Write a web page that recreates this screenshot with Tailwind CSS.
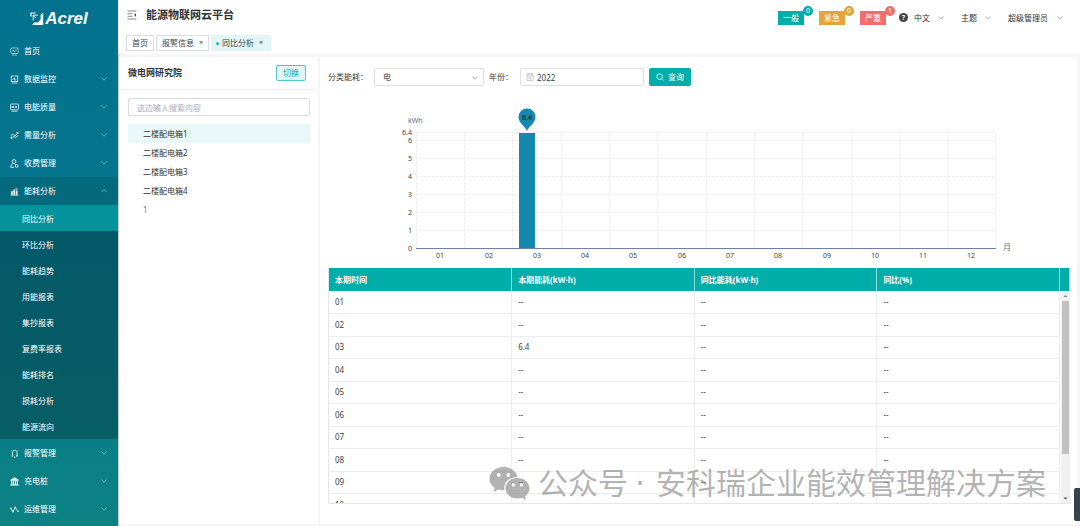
<!DOCTYPE html>
<html lang="zh-CN">
<head>
<meta charset="utf-8">
<title>能源物联网云平台</title>
<script src="https://cdn.jsdelivr.net/npm/@tailwindcss/browser@4"></script>
</head>
<body class="relative flex h-screen overflow-hidden bg-[#f6f6f6] font-['Noto_Sans','Noto_Sans_CJK_SC',sans-serif] text-[8px] leading-3 text-[#404244]">
<svg class="hidden">
  <symbol id="down" viewBox="0 0 8 8"><path d="M1.5 2.5 4 5.2 6.500 2.500" fill="none" stroke="currentColor" stroke-width=".8"/></symbol>
  <symbol id="up" viewBox="0 0 8 8"><path d="M1.500 5.200 4 2.500 6.500 5.200" fill="none" stroke="currentColor" stroke-width=".8"/></symbol>
</svg>

<nav class="flex w-[118px] shrink-0 flex-col overflow-hidden bg-linear-to-b from-[#03728f] via-[#06778b] to-[#0c8284] text-white shadow-[1px_0_2px_rgba(0,0,0,0.25)]">
  <a href="#" class="flex h-[37px] shrink-0 items-center justify-center gap-px" aria-label="Acrel">
    <svg class="size-[14px]" viewBox="0 0 14 14" fill="none" stroke="white"><path d="M1 4.500V1H5.500" stroke-width="1.200"/><path d="M3.200 8.500V3.200H8" stroke-width=".9"/><path d="M3.500 3.500 6 6" stroke-width="1"/><path d="M13.200.8V13H2.200L4 10.600H7.800L10.600 7.600V2.800Z" fill="white" stroke="none"/></svg>
    <span class="font-['Liberation_Sans',sans-serif] text-[17px] leading-5 font-bold italic">Acrel</span>
  </a>
  <a href="#" class="flex h-[28px] shrink-0 items-center gap-[5px] px-[10px]">
    <svg class="size-[9px] opacity-80" viewBox="0 0 9 9" fill="none" stroke="currentColor" stroke-width=".7"><rect x=".8" y="1" width="7.400" height="5.500" rx="1"/><path d="M2.500 4.500 3.500 3l1 1.500L6.500 3M2 8h5"/></svg>
    <span>首页</span>
  </a>
  <a href="#" class="flex h-[28px] shrink-0 items-center gap-[5px] px-[10px]">
    <svg class="size-[9px]" viewBox="0 0 9 9" fill="none" stroke="currentColor" stroke-width=".7"><rect x="1.200" y="1" width="6.600" height="5.500"/><path d="M2.500 4.200h1.300l.9-1.400v2.200h1.800M1.500 8H7.500"/></svg>
    <span class="grow">数据监控</span><svg class="size-2 opacity-50"><use href="#down"/></svg>
  </a>
  <a href="#" class="flex h-[28px] shrink-0 items-center gap-[5px] px-[10px]">
    <svg class="size-[9px]" viewBox="0 0 9 9" fill="none" stroke="currentColor" stroke-width=".7"><rect x=".5" y="1" width="8" height="5.800" rx="1"/><path d="M2 3v1.800l1.500-1.800v2M5 5l1-2 1 2M1.500 8.200h6"/></svg>
    <span class="grow">电能质量</span><svg class="size-2 opacity-50"><use href="#down"/></svg>
  </a>
  <a href="#" class="flex h-[28px] shrink-0 items-center gap-[5px] px-[10px]">
    <svg class="size-[9px]" viewBox="0 0 9 9" fill="none" stroke="currentColor" stroke-width=".8"><path d="M.8 4.500 3 3l2 2 3-3.500M6.500 1.500H8V3M2 7l2-1.500 1.500 1L8 4.500"/><circle cx="1.500" cy="6.800" r=".7"/></svg>
    <span class="grow">需量分析</span><svg class="size-2 opacity-50"><use href="#down"/></svg>
  </a>
  <a href="#" class="flex h-[28px] shrink-0 items-center gap-[5px] px-[10px]">
    <svg class="size-[9px]" viewBox="0 0 9 9" fill="none" stroke="currentColor" stroke-width=".8"><circle cx="4" cy="2.500" r="1.900"/><path d="M.7 8.300C.8 6 2 4.800 3.500 4.500M.7 8.300H4M5 4.800l1 1"/><circle cx="6.700" cy="7" r="1.400"/></svg>
    <span class="grow">收费管理</span><svg class="size-2 opacity-50"><use href="#down"/></svg>
  </a>
  <a href="#" class="flex h-[28px] shrink-0 items-center gap-[5px] bg-black/10 px-[10px]">
    <svg class="size-[9px]" viewBox="0 0 9 9" fill="currentColor"><path d="M1 4h1.700v3.500H1zM3.400 2.500h1.700v5H3.400zM5.800 3.500h1.700v4H5.800zM.5 7.800h8v.6h-8zM5.500 1.500h2v1h-2z"/></svg>
    <span class="grow">能耗分析</span><svg class="size-2 opacity-50"><use href="#up"/></svg>
  </a>
  <div class="flex shrink-0 flex-col bg-black/25">
    <a href="#" class="flex h-[26px] items-center bg-[#04939d] pt-px pl-[22px]">同比分析</a>
    <a href="#" class="flex h-[26px] items-center pt-px pl-[22px]">环比分析</a>
    <a href="#" class="flex h-[26px] items-center pt-px pl-[22px]">能耗趋势</a>
    <a href="#" class="flex h-[26px] items-center pt-px pl-[22px]">用能报表</a>
    <a href="#" class="flex h-[26px] items-center pt-px pl-[22px]">集抄报表</a>
    <a href="#" class="flex h-[26px] items-center pt-px pl-[22px]">复费率报表</a>
    <a href="#" class="flex h-[26px] items-center pt-px pl-[22px]">能耗排名</a>
    <a href="#" class="flex h-[26px] items-center pt-px pl-[22px]">损耗分析</a>
    <a href="#" class="flex h-[26px] items-center pt-px pl-[22px]">能源流向</a>
  </div>
  <a href="#" class="flex h-[28px] shrink-0 items-center gap-[5px] px-[10px]">
    <svg class="size-[9px]" viewBox="0 0 9 9" fill="none" stroke="currentColor" stroke-width=".8"><path d="M2.500 7V3.500C2.500 2 3.300 1.300 4.800 1.300S7 2 7 3.500V7M1.500 7h2M6 7h2M4 8.200h1.500M1.200 1.500l.6.500M8.300 1.500l-.6.500"/></svg>
    <span class="grow">报警管理</span><svg class="size-2 opacity-50"><use href="#down"/></svg>
  </a>
  <a href="#" class="flex h-[28px] shrink-0 items-center gap-[5px] px-[10px]">
    <svg class="size-[9px]" viewBox="0 0 9 9" fill="currentColor"><path d="M4.500.3 8.500 2.800v.9h-8v-.9zM1.200 4h1.200v3.500H1.200zM3.300 4h.9v3.500h-.9zM4.900 4h.9v3.500h-.9zM6.700 4h1.200v3.500H6.700zM.3 7.600h8.400v.9H.3z"/></svg>
    <span class="grow">充电桩</span><svg class="size-2 opacity-50"><use href="#down"/></svg>
  </a>
  <a href="#" class="flex h-[28px] shrink-0 items-center gap-[5px] px-[10px]">
    <svg class="size-[9px]" viewBox="0 0 9 9" fill="none" stroke="currentColor" stroke-width=".9"><path d="M.8 3.500 2.800 6.800 5.300 2.500 7.800 6"/><g fill="currentColor" stroke="none"><circle cx=".9" cy="3.200" r=".8"/><circle cx="2.800" cy="6.800" r=".8"/><circle cx="5.300" cy="2.400" r=".8"/><circle cx="8" cy="6.200" r=".8"/></g></svg>
    <span class="grow">运维管理</span><svg class="size-2 opacity-50"><use href="#down"/></svg>
  </a>
</nav>

<div class="flex min-w-0 grow flex-col">
  <header class="h-[54px] shrink-0 bg-white">
    <div class="flex h-[35px] items-center justify-between pr-4 pl-[9px]">
      <div class="flex items-center gap-[9px] pb-[6px]">
        <button aria-label="折叠菜单"><svg class="size-[10px]" viewBox="0 0 10 10" stroke="#666" stroke-width=".8" fill="none"><path d="M.5 1h9M.5 3.700h5M.5 6.300h5M.5 9h9"/><path d="M9 3 7 5l2 2z" fill="#555" stroke="none"/></svg></button>
        <h1 class="text-[11px] leading-4 font-bold text-[#303133]">能源物联网云平台</h1>
      </div>
      <div class="flex items-center text-[#333]">
        <button class="relative mr-[15px] h-[14px] w-[26px] bg-[#00ada8] text-white">一般<span class="absolute -top-[5px] -right-[9px] size-[10px] rounded-full bg-[#00ada8] text-[7px] leading-[10px]">0</span></button>
        <button class="relative mr-[15px] h-[14px] w-[26px] bg-[#e6a23c] text-white">紧急<span class="absolute -top-[5px] -right-[9px] size-[10px] rounded-full bg-[#e6a23c] text-[7px] leading-[10px]">0</span></button>
        <button class="relative mr-[13px] h-[14px] w-[26px] bg-[#f56c6c] text-white">严重<span class="absolute -top-[5px] -right-[9px] size-[10px] rounded-full bg-[#f56c6c] text-[7px] leading-[10px]">1</span></button>
        <button class="mr-[6px] size-[9px] rounded-full bg-[#444] text-[7px] leading-[9px] font-bold text-white" aria-label="帮助">?</button>
        <button class="mr-[16px] flex items-center gap-[7px]">中文<svg class="size-2 text-[#aaa]"><use href="#down"/></svg></button>
        <button class="mr-[16px] flex items-center gap-[7px]">主题<svg class="size-2 text-[#aaa]"><use href="#down"/></svg></button>
        <button class="flex items-center gap-[8px]">超级管理员<svg class="size-2 text-[#aaa]"><use href="#down"/></svg></button>
      </div>
    </div>
    <div class="flex gap-[2px] pl-2">
      <a href="#" class="flex h-4 items-center border border-[#d8dce5] px-[5px]">首页</a>
      <a href="#" class="flex h-4 items-center gap-[5px] border border-[#d8dce5] px-[5px]">报警信息<span class="text-[7px]">×</span></a>
      <a href="#" class="flex h-4 items-center gap-[5px] border border-[#e0f5f4] bg-[#e3f6f5] px-1"><span class="-mr-[2px] size-[3px] rounded-full bg-[#13c2b8]"></span>同比分析<span class="pr-[3px] text-[7px]">×</span></a>
    </div>
  </header>

  <div class="flex min-h-0 grow gap-[2px] pt-[3px] pr-[3px] pb-[2px] pl-px">
    <aside class="w-[199px] shrink-0 bg-white">
      <div class="flex h-[33px] items-center justify-between border-b border-[#f0f0f0] pr-3 pl-[9px]">
        <h2 class="text-[9px] font-bold text-[#333]">微电网研究院</h2>
        <button class="h-4 w-[30px] rounded-[2px] border border-[#4fc9c5] bg-[#e3f6f5] leading-[14px] text-[#00ada8]">切换</button>
      </div>
      <div class="flex flex-col gap-2 pt-2 pr-2 pl-[9px]">
        <input type="text" aria-label="搜索" placeholder="这边输入搜索内容" class="h-[18px] w-full rounded-[2px] border border-[#d9dce0] px-2 text-[8px] placeholder:text-[#a8abb2]">
        <ul>
          <li><a href="#" class="flex h-[19px] items-center bg-[#e8f7f7] pl-[15px] text-[#333]">二楼配电箱1</a></li>
          <li><a href="#" class="flex h-[19px] items-center pl-[15px] text-[#333]">二楼配电箱2</a></li>
          <li><a href="#" class="flex h-[19px] items-center pl-[15px] text-[#333]">二楼配电箱3</a></li>
          <li><a href="#" class="flex h-[19px] items-center pl-[15px] text-[#333]">二楼配电箱4</a></li>
          <li><a href="#" class="flex h-[19px] items-center pl-[15px] text-[#777]">1</a></li>
        </ul>
      </div>
    </aside>

    <main class="flex min-w-0 grow flex-col bg-white pt-[11px] pr-[7px] pb-5 pl-2">
      <form class="flex h-[18px] shrink-0 items-center">
        <label for="energy" class="w-[46px]">分类能耗：</label>
        <div class="relative mr-[5px]">
          <select id="energy" class="h-[18px] w-[110px] appearance-none rounded-[2px] border border-[#dcdfe6] pl-2 text-[8px]"><option>电</option></select>
          <svg class="pointer-events-none absolute top-[6px] right-[5px] size-2 text-[#aaa]"><use href="#down"/></svg>
        </div>
        <label for="year" class="w-[31px]">年份：</label>
        <div class="relative mr-[5px]">
          <input id="year" type="text" value="2022" class="h-[18px] w-[124px] rounded-[2px] border border-[#dcdfe6] pl-[16px] text-[8px]">
          <svg class="absolute top-[5px] left-[6px] size-2" viewBox="0 0 8 8" fill="none" stroke="#b4b7bd" stroke-width=".7"><path d="M1 1h6v6.500H1zM1 2.800h6M2.500 4.200h3M2.500 5.800h3M2.500 0v1.500M5.500 0v1.500"/></svg>
        </div>
        <button type="button" class="flex h-[18px] w-[42px] items-center justify-center gap-[4px] rounded-[2px] bg-[#00ada8] text-white"><svg class="size-2" viewBox="0 0 8 8" fill="none" stroke="white" stroke-width=".8"><circle cx="3.600" cy="3.600" r="2.800"/><path d="M5.600 5.600 7.500 7.500"/></svg>查询</button>
      </form>

      <svg class="mt-[14px] mb-1 h-auto w-full shrink-0" viewBox="0 0 742 164" role="img" aria-label="月度能耗柱状图">
        <path d="M88 32.500H668M88 40.500H668M88 58.500H668M88 76.500H668M88 94.500H668M88 112.500H668M88 130.500H668M88.500 33V148M136.500 33V148M184.500 33V148M233.500 33V148M281.500 33V148M329.500 33V148M378.500 33V148M426.500 33V148M474.500 33V148M523.500 33V148M571.500 33V148M619.500 33V148M667.500 33V148" stroke="#efefef" stroke-dasharray="3 1" fill="none"/>
        <rect x="191" y="33" width="16" height="115" fill="#1488ae"/>
        <path d="M88 148.500H668" stroke="#6e7fa3"/>
        <path d="M199 31C197 26 190.500 23 190.500 17A8.500 8.500 0 0 1 207.500 17C207.500 23 201 26 199 31Z" fill="#1488ae"/>
        <g font-size="7" fill="#444">
          <text x="199" y="20" text-anchor="middle" fill="#111">6.4</text>
          <text x="80" y="23" fill="#5d6b8c">kWh</text>
          <text x="675" y="150" fill="#5d6b8c" font-size="8">月</text>
          <g text-anchor="end"><text x="84" y="35">6.4</text><text x="84" y="43">6</text><text x="84" y="61">5</text><text x="84" y="79">4</text><text x="84" y="97">3</text><text x="84" y="115">2</text><text x="84" y="133">1</text><text x="84" y="151">0</text></g>
          <g text-anchor="middle"><text x="112" y="158">01</text><text x="161" y="158">02</text><text x="209" y="158">03</text><text x="257" y="158">04</text><text x="305" y="158">05</text><text x="354" y="158">06</text><text x="402" y="158">07</text><text x="450" y="158">08</text><text x="499" y="158">09</text><text x="547" y="158">10</text><text x="595" y="158">11</text><text x="643" y="158">12</text></g>
        </g>
      </svg>

      <div class="relative min-h-0 grow overflow-hidden border-b border-l border-[#e4e6ea]">
        <table class="w-full table-fixed border-collapse text-left [&_td]:border-r [&_td]:border-b [&_td]:border-[#ebedf0] [&_td]:px-[6px] [&_th]:border-r [&_th]:border-[#8fd9d6] [&_th]:px-[6px]">
          <colgroup><col><col><col><col><col class="w-[10px]"></colgroup>
          <thead><tr class="h-[23px] bg-[#00ada8] text-white"><th>本期时间</th><th>本期能耗(kW·h)</th><th>同比能耗(kW·h)</th><th>同比(%)</th><th></th></tr></thead>
          <tbody class="[&_tr]:odd:h-[22px] [&_tr]:even:h-[23px]">
            <tr><td>01</td><td>--</td><td>--</td><td>--</td></tr>
            <tr><td>02</td><td>--</td><td>--</td><td>--</td></tr>
            <tr><td>03</td><td>6.4</td><td>--</td><td>--</td></tr>
            <tr><td>04</td><td>--</td><td>--</td><td>--</td></tr>
            <tr><td>05</td><td>--</td><td>--</td><td>--</td></tr>
            <tr><td>06</td><td>--</td><td>--</td><td>--</td></tr>
            <tr><td>07</td><td>--</td><td>--</td><td>--</td></tr>
            <tr><td>08</td><td>--</td><td>--</td><td>--</td></tr>
            <tr><td>09</td><td>--</td><td>--</td><td>--</td></tr>
            <tr><td>10</td><td></td><td></td><td></td></tr>
          </tbody>
        </table>
        <div class="absolute top-[23px] right-0 bottom-0 flex w-[9px] flex-col items-center bg-[#f1f1f1]">
          <svg class="h-[10px] w-[9px] shrink-0" viewBox="0 0 9 10"><path d="M2.500 6 4.500 4l2 2z" fill="#888"/></svg>
          <div class="h-[153px] w-[7px] bg-[#c1c1c1]"></div>
          <svg class="mt-auto h-[10px] w-[9px] shrink-0" viewBox="0 0 9 10"><path d="M2.500 4.500 4.500 6.500l2-2z" fill="#444"/></svg>
        </div>
      </div>
    </main>
  </div>
</div>

<div class="pointer-events-none absolute right-[34px] bottom-[22px] flex items-center gap-2 text-[30px] leading-[42px] whitespace-nowrap text-[#808080]/60">
  <svg class="h-[34px] w-[41px] opacity-60" viewBox="0 0 41 34" fill="#808080" fill-rule="evenodd"><path d="M14.500 1C6.500 1 .5 6.200.5 12.800c0 3.800 2 6.900 5.200 9L4.500 26l5-2.600c1.800.6 3.700.9 6 .8C14 17 20 10.700 28.500 11.200 27.200 5.300 21.500 1 14.500 1ZM9.800 7a1.900 1.900 0 1 1 0 3.800 1.900 1.900 0 0 1 0-3.800Zm9.500 0a1.900 1.900 0 1 1 0 3.800 1.900 1.900 0 0 1 0-3.800Z"/><path d="M28.500 12C21.800 12 16.500 16.500 16.500 22.300S21.800 32.500 28.500 32.500c1.600 0 3-.2 4.400-.7L37 34l-1-3.700c2.800-1.900 4.500-4.700 4.500-8C40.500 16.500 35.200 12 28.500 12ZM24.300 17.300a1.600 1.600 0 1 1 0 3.200 1.600 1.600 0 0 1 0-3.200Zm8.200 0a1.600 1.600 0 1 1 0 3.200 1.600 1.600 0 0 1 0-3.200Z"/></svg>
  <span>公众号</span><span>·</span><span class="pl-1">安科瑞企业能效管理解决方案</span>
</div>
<div class="absolute right-0 bottom-[5px] h-[33px] w-[6px] rounded-l-[2px] bg-[#36424d]"></div>
</body>
</html>
